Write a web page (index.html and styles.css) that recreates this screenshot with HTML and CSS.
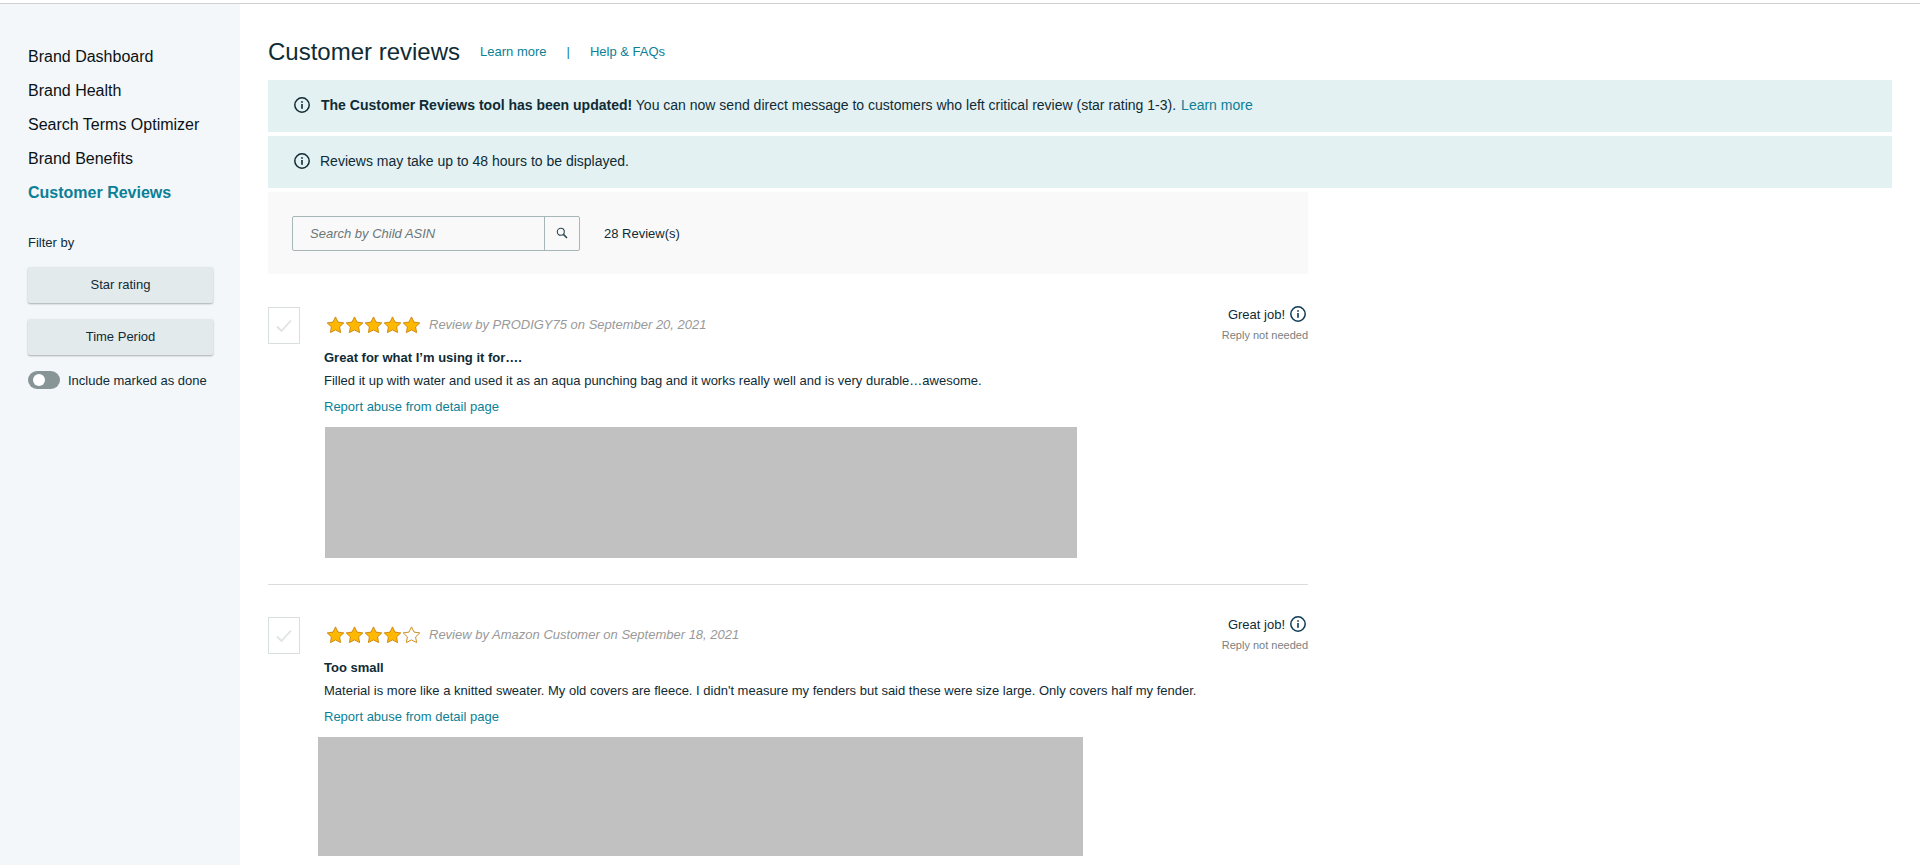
FILE: index.html
```html
<!DOCTYPE html>
<html lang="en">
<head>
<meta charset="utf-8">
<title>Customer reviews</title>
<link rel="stylesheet" href="styles.css">
</head>
<body>
<svg class="defs" width="0" height="0" aria-hidden="true">
  <defs>
    <symbol id="info" viewBox="0 0 16 16">
      <circle cx="8" cy="8" r="7.2" fill="none" stroke="currentColor" stroke-width="1.5"/>
      <rect x="7.2" y="7" width="1.6" height="4.8" fill="currentColor"/>
      <rect x="7.2" y="4.2" width="1.6" height="1.6" fill="currentColor"/>
    </symbol>
    <symbol id="star" viewBox="0 0 18 18">
      <path d="M9 .9l2.5 5.2 5.8.8-4.2 4 1 5.7L9 13.9l-5.1 2.7 1-5.7-4.2-4 5.8-.8z" fill="#ffb800" stroke="#c9820c" stroke-width=".9"/>
    </symbol>
    <symbol id="star-empty" viewBox="0 0 18 18">
      <path d="M9 .9l2.5 5.2 5.8.8-4.2 4 1 5.7L9 13.9l-5.1 2.7 1-5.7-4.2-4 5.8-.8z" fill="#fff" stroke="#c9820c" stroke-width=".9"/>
    </symbol>
    <symbol id="check" viewBox="0 0 16 14">
      <path d="M1 7.5l4.5 4.5L15 1.5" fill="none" stroke="#dfe3e4" stroke-width="1.8"/>
    </symbol>
  </defs>
</svg>
<div class="topline"></div>
<div class="page">
  <aside class="sidebar">
    <nav class="nav">
      <a class="nav-item">Brand Dashboard</a>
      <a class="nav-item">Brand Health</a>
      <a class="nav-item">Search Terms Optimizer</a>
      <a class="nav-item">Brand Benefits</a>
      <a class="nav-item nav-active">Customer Reviews</a>
    </nav>
    <div class="filter-label">Filter by</div>
    <button class="filter-btn">Star rating</button>
    <button class="filter-btn">Time Period</button>
    <div class="toggle-row">
      <span class="toggle"><span class="knob"></span></span>
      <span class="toggle-text">Include marked as done</span>
    </div>
  </aside>
  <main class="main">
    <header class="title-row">
      <h1 class="title">Customer reviews</h1>
      <a class="link head-link">Learn more</a>
      <span class="link sep">|</span>
      <a class="link">Help &amp; FAQs</a>
    </header>
    <div class="alert">
      <svg class="alert-icon"><use href="#info"/></svg>
      <p class="alert-text"><b>The Customer Reviews tool has been updated!</b> You can now send direct message to customers who left critical review (star rating 1-3).<a class="link alert-link">Learn more</a></p>
    </div>
    <div class="alert">
      <svg class="alert-icon"><use href="#info"/></svg>
      <p class="alert-text alert-plain">Reviews may take up to 48 hours to be displayed.</p>
    </div>
    <div class="column">
      <div class="toolbar">
        <div class="search">
          <span class="search-input">Search by Child ASIN</span>
          <span class="search-btn">
            <svg class="search-icon" viewBox="0 0 12 12"><circle cx="4.8" cy="4.8" r="3.5" fill="none" stroke="#2b4550" stroke-width="1.1"/><path d="M7.4 7.4l3.6 3.6" stroke="#2b4550" stroke-width="1.5"/></svg>
          </span>
        </div>
        <span class="count">28 Review(s)</span>
      </div>

      <article class="review">
        <span class="check"><svg class="check-icon"><use href="#check"/></svg></span>
        <div class="review-body">
          <div class="review-head">
            <div class="rating">
              <svg class="star"><use href="#star"/></svg><svg class="star"><use href="#star"/></svg><svg class="star"><use href="#star"/></svg><svg class="star"><use href="#star"/></svg><svg class="star"><use href="#star"/></svg>
              <span class="byline">Review by PRODIGY75 on September 20, 2021</span>
            </div>
            <div class="status">
              <div class="status-top">Great job!<svg class="status-icon"><use href="#info"/></svg></div>
              <div class="status-sub">Reply not needed</div>
            </div>
          </div>
          <h2 class="review-title">Great for what I’m using it for….</h2>
          <p class="review-text">Filled it up with water and used it as an aqua punching bag and it works really well and is very durable…awesome.</p>
          <a class="link report">Report abuse from detail page</a>
          <div class="shot shot-a"></div>
        </div>
      </article>

      <article class="review">
        <span class="check"><svg class="check-icon"><use href="#check"/></svg></span>
        <div class="review-body">
          <div class="review-head">
            <div class="rating">
              <svg class="star"><use href="#star"/></svg><svg class="star"><use href="#star"/></svg><svg class="star"><use href="#star"/></svg><svg class="star"><use href="#star"/></svg><svg class="star"><use href="#star-empty"/></svg>
              <span class="byline">Review by Amazon Customer on September 18, 2021</span>
            </div>
            <div class="status">
              <div class="status-top">Great job!<svg class="status-icon"><use href="#info"/></svg></div>
              <div class="status-sub">Reply not needed</div>
            </div>
          </div>
          <h2 class="review-title">Too small</h2>
          <p class="review-text">Material is more like a knitted sweater. My old covers are fleece. I didn't measure my fenders but said these were size large. Only covers half my fender.</p>
          <a class="link report">Report abuse from detail page</a>
          <div class="shot shot-b"></div>
        </div>
      </article>
    </div>
  </main>
</div>
</body>
</html>
```
FILE: styles.css
```css
* { box-sizing: border-box; }
html, body { margin: 0; height: 865px; overflow: hidden; background: #fff; }
body { font-family: "Liberation Sans", Arial, sans-serif; color: #0f2b35; }
.defs { position: absolute; }
.topline { height: 1px; margin-top: 3px; background: #cfd1d2; }
.page { display: flex; height: 861px; }
.sidebar { width: 240px; flex: none; background: #f3f7fa; padding: 36px 27px 0 28px; }
.nav { display: flex; flex-direction: column; }
.nav-item { font-size: 16px; line-height: 34px; color: #0b1215; }
.nav-active { color: #0b7f96; font-weight: 700; }
.filter-label { font-size: 13px; line-height: 16px; margin-top: 25px; color: #0f2b35; }
.filter-btn { display: block; width: 185px; height: 36px; margin: 16px 0 0; padding: 0 0 2px; border: 0; border-radius: 2px; background: #e3eaeb; box-shadow: 0 1px 2px rgba(0,0,0,.3); font: 13px "Liberation Sans", Arial, sans-serif; color: #0f2b35; }
.filter-btn + .filter-btn { margin-top: 16px; }
.toggle-row { display: flex; align-items: center; margin-top: 16px; }
.toggle { width: 32px; height: 18px; border-radius: 9px; background: #879596; display: flex; align-items: center; padding-left: 5px; }
.knob { width: 12px; height: 12px; border-radius: 50%; background: #fff; }
.toggle-text { font-size: 13px; margin-left: 8px; white-space: nowrap; }
.main { flex: 1; padding: 0 28px 0 28px; }
.title-row { display: flex; align-items: center; height: 76px; padding-top: 18px; }
.title { margin: 2px 0 0; font-size: 24px; font-weight: 400; color: #0f2b35; }
.link { color: #0b7f96; font-size: 13px; }
.head-link { margin-left: 20px; }
.sep { margin: 0 20px; }
.alert { display: flex; align-items: center; height: 52px; background: #e3f1f3; padding: 0 0 2px 26px; margin-bottom: 4px; }
.alert-icon { width: 16px; height: 16px; color: #0f2b35; flex: none; }
.alert-text { margin: 0 0 0 11px; font-size: 14px; }
.alert-plain { margin-left: 10px; }
.alert-link { font-size: 14px; margin-left: 5px; }
.column { width: 1040px; }
.toolbar { height: 82px; background: #f9f9f9; display: flex; align-items: center; padding: 0 24px; }
.search { display: flex; height: 35px; width: 288px; border: 1px solid #a7b7b8; border-radius: 2px; background: #f9f9f9; }
.search-input { flex: 1; font-size: 13px; font-style: italic; color: #6c7778; line-height: 33px; padding-left: 17px; }
.search-btn { width: 35px; border-left: 1px solid #a7b7b8; display: flex; align-items: center; justify-content: center; }
.search-icon { width: 12px; height: 12px; }
.count { font-size: 13px; margin-left: 24px; }
.review { display: flex; padding: 33px 0 26px; border-bottom: 1px solid #d9dcdd; }
.review + .review { border-bottom: 0; padding-top: 32px; }
.check { width: 32px; height: 37px; flex: none; border: 1px solid #d9dedf; display: flex; align-items: center; justify-content: center; }
.check-icon { width: 16px; height: 14px; }
.review-body { flex: 1; margin-left: 24px; min-width: 0; }
.review-head { display: flex; justify-content: space-between; align-items: flex-start; height: 43px; }
.rating { display: flex; align-items: center; height: 36px; padding-left: 2px; }
.star { width: 19px; height: 18px; flex: none; }
.byline { font-size: 13px; font-style: italic; color: #999; margin: 0 0 1px 8px; }
.status { text-align: right; margin-top: -2px; }
.status-top { display: flex; align-items: center; justify-content: flex-end; font-size: 13px; height: 18px; }
.status-icon { width: 16px; height: 16px; margin: 0 2px 0 5px; color: #0f3a56; }
.status-sub { font-size: 11px; color: #7a7f80; margin-top: 6px; }
.review-title { margin: 0; font-size: 13px; font-weight: 700; line-height: 16px; }
.review-text { margin: 7px 0 0; font-size: 13px; line-height: 16px; }
.report { display: block; line-height: 16px; margin-top: 10px; }
.shot { background: #c1c1c1; margin-top: 12px; }
.shot-a { width: 752px; height: 131px; margin-left: 1px; }
.shot-b { width: 765px; height: 119px; margin-left: -6px; }
```
